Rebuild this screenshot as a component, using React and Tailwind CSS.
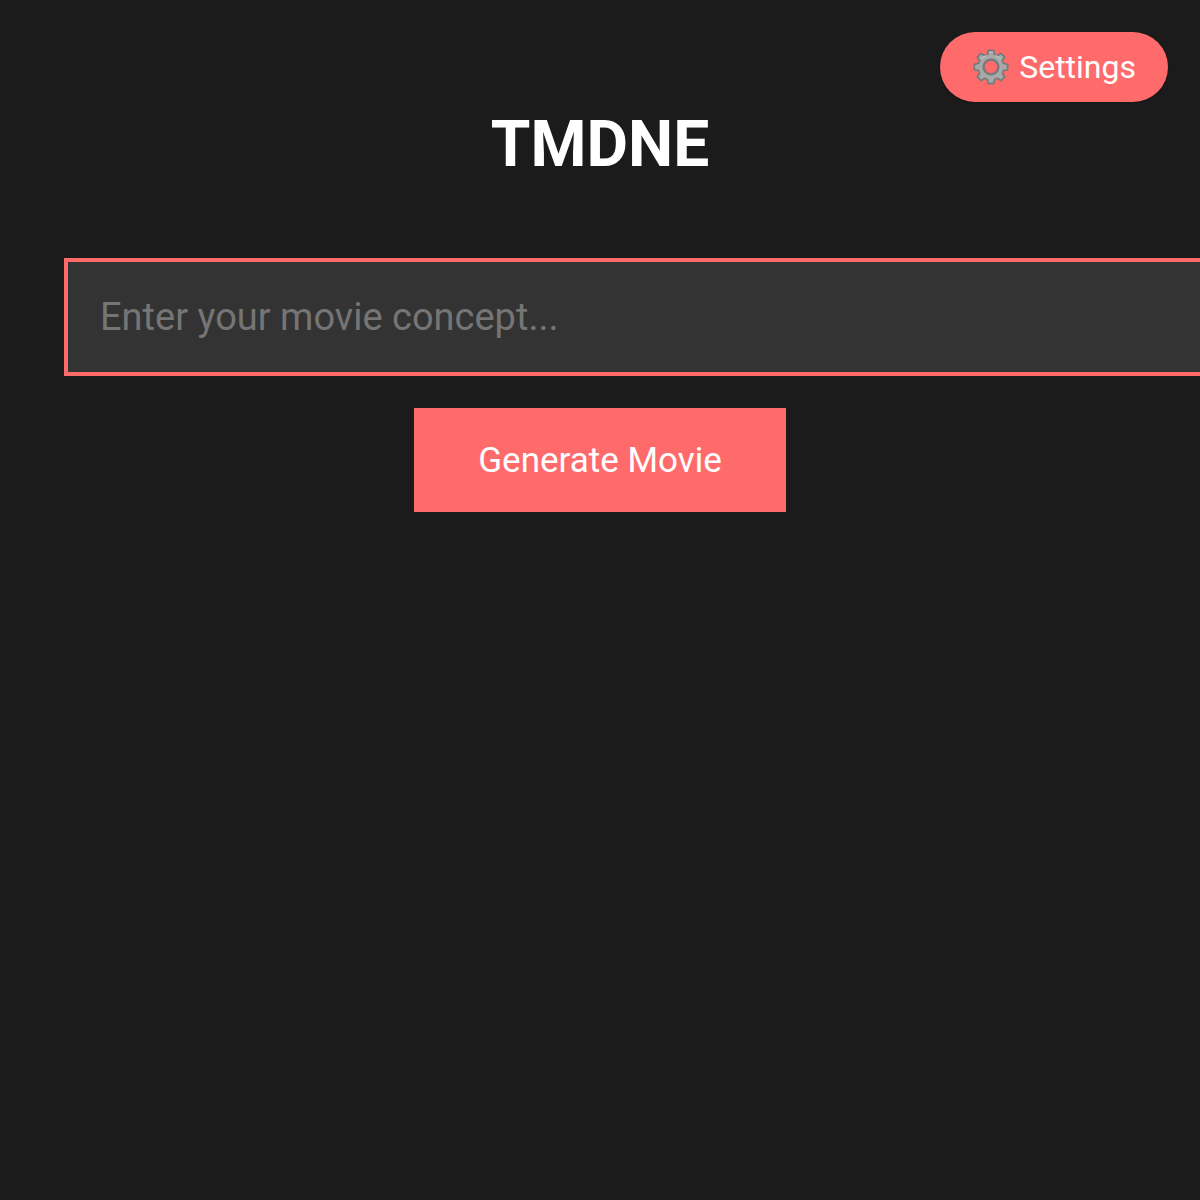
const TEETH = [0, 45, 90, 135, 180, 225, 270, 315];

function GearIcon() {
  return (
    <svg className="w-[38px] h-9" viewBox="0 0 36 36" aria-hidden="true">
      {/* dark outline first, lighter metal on top */}
      <g fill="#747a7b">
        {TEETH.map((angle) => (
          <path key={angle} d="M13 7.4 14.5 1.3Q14.7.5 15.5.5h5q.8 0 1 .8L23 7.4z" transform={`rotate(${angle} 18 18)`} />
        ))}
      </g>
      <circle cx="18" cy="18" r="9.8" fill="none" stroke="#747a7b" strokeWidth="7.2" />
      <g fill="#a6a9a8">
        {TEETH.map((angle) => (
          <path key={angle} d="M14.5 8.6 16.1 2.2h3.8l1.6 6.4z" transform={`rotate(${angle} 18 18)`} />
        ))}
      </g>
      <circle cx="18" cy="18" r="10.3" fill="none" stroke="#a6a9a8" strokeWidth="3.6" />
      <path d="M16.6 3.2h2.8M8.6 9.6a12.4 12.4 0 0 1 5-3M27.4 9.6a12.4 12.4 0 0 0-5-3" fill="none" stroke="#bcc1c0" strokeWidth="1.2" strokeLinecap="round" />
    </svg>
  );
}

function SettingsButton() {
  return (
    <button
      type="button"
      className="absolute top-8 right-8 flex items-center gap-[9px] px-8 py-4 rounded-full bg-[#ff6b6b] text-white text-[32px] leading-[38px] shadow-sm"
    >
      <GearIcon />
      Settings
    </button>
  );
}

function App() {
  return (
    <div className="relative min-h-screen overflow-hidden bg-[#1b1b1b] px-16 pt-[105px] text-white font-[Roboto,sans-serif]">
      <SettingsButton />

      <h1 className="mb-[73px] text-center text-[64px] leading-20 font-bold">TMDNE</h1>

      <form className="flex flex-col items-center gap-8" onSubmit={(e) => e.preventDefault()}>
        {/* padding and border are added to the full width, so the field runs past the right edge */}
        <input
          type="text"
          aria-label="Movie concept"
          placeholder="Enter your movie concept..."
          className="box-content w-full h-[46px] self-start p-8 border-4 border-[#ff6b6b] bg-[#333333] text-[38px] text-white placeholder:text-[#757575] outline-none"
        />
        <button type="submit" className="px-16 pt-[33px] pb-[31px] bg-[#ff6b6b] text-white text-[35px] leading-10">
          Generate Movie
        </button>
      </form>
    </div>
  );
}

export default App;
